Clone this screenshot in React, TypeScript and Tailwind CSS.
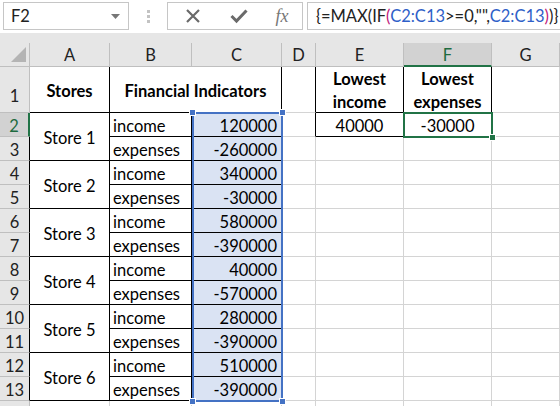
import React from "react";

const stores: [number, number][] = [
  [120000, -260000],
  [340000, -30000],
  [580000, -390000],
  [40000, -570000],
  [280000, -390000],
  [510000, -390000],
];

const FONT = { fontFamily: "Lato, 'Liberation Sans', sans-serif" };

function ColHead({ label, active }: { label: string; active?: boolean }) {
  return (
    <div
      className={
        active
          ? "flex items-center justify-center pt-[2px] bg-[#d2d2d2] text-[#1e6b3f] border-r border-[#bfbfbf] border-b-2 border-b-[#217346]"
          : "flex items-center justify-center pt-[2px] bg-[#e6e6e6] text-[#222] border-r border-b border-[#bfbfbf]"
      }
    >
      {label}
    </div>
  );
}

function RowHead({ n }: { n: number }) {
  if (n === 2) {
    return (
      <div className="flex items-center justify-center pt-[3px] bg-[#d2d2d2] text-[#1e6b3f] border-b border-[#bfbfbf] border-r-2 border-r-[#217346]">
        {n}
      </div>
    );
  }
  return (
    <div
      className={
        n >= 3 && n <= 13
          ? "flex items-center justify-center pt-[3px] bg-[#e6e6e6] text-[#222] border-b border-[#bfbfbf] border-r border-r-black"
          : "flex items-center justify-center pt-[3px] bg-[#e6e6e6] text-[#222] border-b border-r border-[#bfbfbf]"
      }
    >
      {n <= 13 ? n : null}
    </div>
  );
}

function Formula() {
  return (
    <span className="whitespace-nowrap">
      {"{=MAX(IF"}
      <span className="text-[#c0187a]">(</span>
      <span className="text-[#2f5fc8]">C2:C13</span>
      {'>=0,"",'}
      <span className="text-[#2f5fc8]">C2:C13</span>
      <span className="text-[#c0187a]">)</span>
      {")}"}
    </span>
  );
}

export default function App() {
  const rows: React.ReactNode[] = [];
  for (let i = 0; i < 12; i++) {
    const r = i + 2;
    const s = Math.floor(i / 2);
    const isIncome = i % 2 === 0;
    const val = stores[s][isIncome ? 0 : 1];
    rows.push(<RowHead key={`h${r}`} n={r} />);
    if (isIncome) {
      rows.push(
        <div key={`a${r}`} className="row-span-2 flex items-center justify-center pt-[3px] border-r border-b border-black">
          Store {s + 1}
        </div>
      );
    }
    rows.push(
      <div key={`b${r}`} className="flex items-center pl-[3px] pt-[3px] border-r border-b border-black">
        {isIncome ? "income" : "expenses"}
      </div>
    );
    rows.push(
      <div key={`c${r}`} className="relative flex items-center justify-end pr-[4px] pt-[3px] bg-[#dae3f3] border-r border-b border-black">
        {val}
        {r === 2 && (
          <div className="absolute left-0 top-[-1px] w-[91px] h-[290px] border-2 border-[#4472c4] z-10">
            <div className="absolute left-[-5px] top-[-5px] w-[7px] h-[7px] bg-[#4472c4] border border-white" />
            <div className="absolute right-[-5px] top-[-5px] w-[7px] h-[7px] bg-[#4472c4] border border-white" />
            <div className="absolute left-[-5px] bottom-[-5px] w-[7px] h-[7px] bg-[#4472c4] border border-white" />
            <div className="absolute right-[-5px] bottom-[-5px] w-[7px] h-[7px] bg-[#4472c4] border border-white" />
          </div>
        )}
      </div>
    );
    rows.push(
      <div
        key={`d${r}`}
        className={r === 2 ? "border-r border-r-black border-b border-b-[#d4d4d4]" : "border-r border-b border-[#d4d4d4]"}
      />
    );
    if (r === 2) {
      rows.push(
        <div key="e2" className="flex items-center justify-center pt-[3px] border-r border-b border-black">
          40000
        </div>
      );
      rows.push(
        <div key="f2" className="relative flex items-center justify-center pt-[3px] border-r border-b border-black">
          -30000
          <div className="absolute left-[-1px] top-[-1px] right-[-2px] bottom-[-2px] border-2 border-[#217346] z-10">
            <div className="absolute right-[-5px] bottom-[-5px] w-[7px] h-[7px] bg-[#217346] border border-white" />
          </div>
        </div>
      );
    } else {
      rows.push(<div key={`e${r}`} className="border-r border-b border-[#d4d4d4]" />);
      rows.push(<div key={`f${r}`} className="border-r border-b border-[#d4d4d4]" />);
    }
    rows.push(<div key={`g${r}`} className="border-r border-b border-[#d4d4d4]" />);
  }

  return (
    <div className="w-[560px] h-[406px] overflow-hidden bg-white text-[16.5px] text-black" style={FONT}>
      {/* formula bar */}
      <div className="h-[33px] flex items-start pt-[2px] bg-white">
        <div className="shrink-0 ml-[3px] w-[126px] h-[28px] border border-[#c6c6c6] flex items-center justify-between pl-[7px] pr-[8px] text-[#222]">
          <span>F2</span>
          <svg width="9" height="5" viewBox="0 0 9 5">
            <path d="M0 0 L9 0 L4.5 5 Z" fill="#777" />
          </svg>
        </div>
        <div className="shrink-0 w-[38px] h-[28px] flex flex-col items-center justify-center gap-[2px]">
          <div className="w-[3px] h-[3px] bg-[#c3c3c3]" />
          <div className="w-[3px] h-[3px] bg-[#c3c3c3]" />
          <div className="w-[3px] h-[3px] bg-[#c3c3c3]" />
        </div>
        <div className="shrink-0 w-[136px] h-[28px] border border-[#c6c6c6] flex items-center">
          <div className="w-[46px] flex justify-center ml-[2px]">
            <svg width="16" height="16" viewBox="0 0 16 16">
              <path d="M2 2 L14 14 M14 2 L2 14" stroke="#6a6a6a" strokeWidth="2.2" />
            </svg>
          </div>
          <div className="w-[46px] flex justify-center">
            <svg width="18" height="16" viewBox="0 0 18 16">
              <path d="M1.5 8 L6.5 13 L16.5 2.5" stroke="#6a6a6a" strokeWidth="3" fill="none" />
            </svg>
          </div>
          <div
            className="w-[40px] flex justify-center italic text-[#777] text-[18px]"
            style={{ fontFamily: "'Liberation Serif', serif" }}
          >
            fx
          </div>
        </div>
        <div className="ml-[4px] flex-1 min-w-0 overflow-hidden h-[28px] border border-[#c6c6c6] border-r-0 flex items-center pl-[8px] text-[#222]">
          <Formula />
        </div>
      </div>
      <div className="h-[10px] bg-[#e6e6e6]" />

      {/* sheet grid */}
      <div className="grid grid-cols-[30px_80px_82px_90px_34px_88px_88px_1fr] grid-rows-[24px_46px_repeat(13,24px)]">
        <div className="relative bg-[#e6e6e6] border-r border-b border-[#bfbfbf]">
          <svg className="absolute right-[3px] bottom-[4px]" width="15" height="15" viewBox="0 0 15 15">
            <path d="M15 0 L15 15 L0 15 Z" fill="#b4b4b4" />
          </svg>
        </div>
        <ColHead label="A" />
        <ColHead label="B" />
        <ColHead label="C" />
        <ColHead label="D" />
        <ColHead label="E" />
        <ColHead label="F" active />
        <ColHead label="G" />

        <div className="flex items-end justify-center pb-[3px] bg-[#e6e6e6] text-[#222] border-r border-b border-[#bfbfbf]">1</div>
        <div className="flex items-center justify-center pt-[3px] font-bold border-r border-b border-black">Stores</div>
        <div className="col-span-2 flex items-center justify-center pt-[3px] font-bold border-r border-b border-black">
          Financial Indicators
        </div>
        <div className="border-r border-r-black border-b border-b-[#d4d4d4]" />
        <div className="flex flex-col items-center justify-center pt-[3px] font-bold leading-[23px] border-r border-b border-black">
          <span>Lowest</span>
          <span>income</span>
        </div>
        <div className="flex flex-col items-center justify-center pt-[3px] font-bold leading-[23px] border-r border-b border-black">
          <span>Lowest</span>
          <span>expenses</span>
        </div>
        <div className="border-r border-b border-[#d4d4d4]" />

        {rows}

        <RowHead n={14} />
        <div className="border-r border-b border-[#d4d4d4]" />
        <div className="border-r border-b border-[#d4d4d4]" />
        <div className="border-r border-b border-[#d4d4d4]" />
        <div className="border-r border-b border-[#d4d4d4]" />
        <div className="border-r border-b border-[#d4d4d4]" />
        <div className="border-r border-b border-[#d4d4d4]" />
        <div className="border-r border-b border-[#d4d4d4]" />
      </div>
    </div>
  );
}
